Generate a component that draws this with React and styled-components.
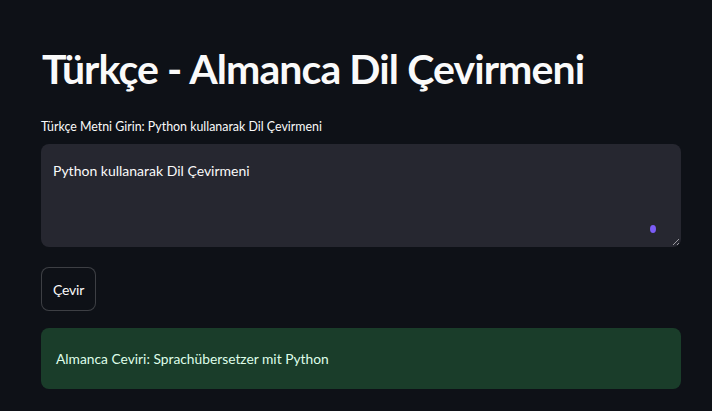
import styled, { createGlobalStyle } from 'styled-components';

const GlobalStyle = createGlobalStyle`
  html, body {
    margin: 0;
    background: #0e1117;
  }
  body {
    font-family: Lato, "Open Sans", sans-serif;
    color: #fafafa;
  }
`;

function App() {
  return (
    <>
      <GlobalStyle />
      <Main>
        <Title>Türkçe - Almanca Dil Çevirmeni</Title>
        <Label>Türkçe Metni Girin: Python kullanarak Dil Çevirmeni</Label>
        <TextBox>
          Python kullanarak Dil Çevirmeni
          <Dot />
          <Grip />
        </TextBox>
        <Button>Çevir</Button>
        <Success>Almanca Ceviri: Sprachübersetzer mit Python</Success>
      </Main>
    </>
  );
}

export default App;

const Main = styled.div`
  width: 640px;
  padding: 44px 0 20px 41px;
  display: flex;
  flex-direction: column;
  align-items: flex-start;
`;

const Title = styled.h1`
  margin: 0 0 0 1px;
  font-size: 41px;
  font-weight: 700;
  line-height: 50px;
  letter-spacing: -0.9px;
  color: #fafafa;
`;

const Label = styled.div`
  margin-top: 25px;
  font-size: 12.4px;
  line-height: 16px;
  color: #fafafa;
`;

const TextBox = styled.div`
  position: relative;
  box-sizing: border-box;
  margin-top: 9px;
  width: 640px;
  height: 103px;
  padding: 16px 12px;
  background: #262730;
  border-radius: 8px;
  font-size: 14px;
  line-height: 22px;
  color: #fafafa;
`;

const Dot = styled.span`
  position: absolute;
  right: 25px;
  bottom: 14px;
  width: 6px;
  height: 8px;
  border-radius: 50%;
  background: #7b5cf6;
`;

const Grip = styled.span`
  position: absolute;
  right: 2px;
  bottom: 2px;
  width: 6px;
  height: 6px;
  background: linear-gradient(135deg, transparent 45%, #9a9aa0 45%, #9a9aa0 55%, transparent 55%, transparent 75%, #9a9aa0 75%, #9a9aa0 85%, transparent 85%);
`;

const Button = styled.button`
  margin-top: 20px;
  box-sizing: border-box;
  height: 44px;
  padding: 0 11px;
  background: #0e1117;
  border: 1px solid rgba(250, 250, 250, 0.2);
  border-radius: 8px;
  font-family: inherit;
  font-size: 14px;
  letter-spacing: -0.2px;
  color: #fafafa;
`;

const Success = styled.div`
  margin-top: 17px;
  box-sizing: border-box;
  width: 640px;
  height: 61px;
  padding: 0 15px;
  display: flex;
  align-items: center;
  background: #1a3d2a;
  border-radius: 8px;
  font-size: 13.8px;
  color: #dffde9;
`;
